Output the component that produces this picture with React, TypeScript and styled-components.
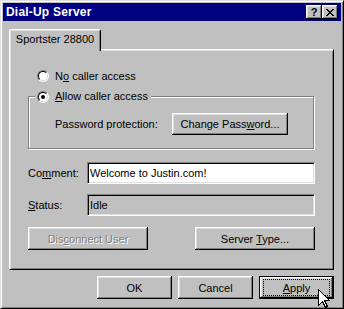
import React from 'react'
import styled, { createGlobalStyle, css } from 'styled-components'

const GlobalStyle = createGlobalStyle`
  html, body {
    margin: 0;
    padding: 0;
    background: #c0c0c0;
  }
  body {
    font-family: "Liberation Sans", Arial, sans-serif;
    font-size: 11px;
    color: #000;
  }
`

const bevel = css`
  box-shadow: inset -1px -1px #000, inset 1px 1px #fff, inset -2px -2px #808080, inset 2px 2px #dfdfdf;
`

const Window = styled.div`
  position: relative;
  box-sizing: border-box;
  width: 344px;
  height: 309px;
  background: #c0c0c0;
  border: 1px solid;
  border-color: #dfdfdf #000 #000 #dfdfdf;
  box-shadow: inset 1px 1px #fff, inset -1px -1px #808080;
  padding: 2px;
  display: flex;
  flex-direction: column;
  overflow: hidden;
`

const TitleBar = styled.div`
  height: 18px;
  background: #000080;
  color: #fff;
  font-weight: bold;
  display: flex;
  align-items: center;
  padding: 0 3px;
`

const Title = styled.span`
  flex: 1;
  font-size: 12px;
  line-height: 14px;
  letter-spacing: 0.2px;
`

const CaptionButton = styled.div`
  box-sizing: border-box;
  width: 16px;
  height: 14px;
  background: #c0c0c0;
  ${bevel}
  display: flex;
  align-items: center;
  justify-content: center;
  color: #000;
  font-weight: bold;
  font-size: 11px;
  line-height: 12px;
`

const Body = styled.div`
  flex: 1;
  padding: 8px 7px 0 6px;
  display: flex;
  flex-direction: column;
`

const TabRow = styled.div`
  display: flex;
`

const Tab = styled.div`
  position: relative;
  z-index: 1;
  box-sizing: border-box;
  width: 92px;
  height: 22px;
  margin-bottom: -2px;
  background: #c0c0c0;
  border: 1px solid;
  border-color: #fff #000 transparent #fff;
  border-bottom: none;
  border-radius: 2px 2px 0 0;
  box-shadow: inset 1px 1px #dfdfdf, inset -1px 0 #808080;
  text-align: center;
  line-height: 13px;
  padding-top: 3px;
`

const Panel = styled.div`
  box-sizing: border-box;
  height: 221px;
  border: 1px solid;
  border-color: #fff #000 #000 #fff;
  box-shadow: inset 1px 1px #dfdfdf, inset -1px -1px #808080;
  padding: 19px 18px 0 18px;
  display: flex;
  flex-direction: column;
`

const RadioRow = styled.label<{ $indent?: number }>`
  display: flex;
  align-items: center;
  height: 13px;
  gap: 6px;
  padding-left: ${(p) => p.$indent ?? 0}px;
`

const RadioOuter = styled.span`
  box-sizing: border-box;
  width: 12px;
  height: 12px;
  border-radius: 50%;
  border: 1px solid;
  border-color: #808080 #fff #fff #808080;
  display: flex;
`

const RadioInner = styled.span<{ $checked?: boolean }>`
  box-sizing: border-box;
  flex: 1;
  border-radius: 50%;
  border: 1px solid;
  border-color: #000 #dfdfdf #dfdfdf #000;
  background: #fff;
  display: flex;
  align-items: center;
  justify-content: center;

  &::after {
    content: '';
    width: 4px;
    height: 4px;
    border-radius: 50%;
    background: #000;
    display: ${(p) => (p.$checked ? 'block' : 'none')};
  }
`

const Key = styled.span`
  text-decoration: underline;
  text-underline-offset: 1px;
`

const Group = styled.fieldset`
  box-sizing: border-box;
  width: 286px;
  min-width: 0;
  margin: 8px 0 0 0;
  padding: 0 0 13px 0;
  border: 1px solid #808080;
  box-shadow: inset 1px 1px #fff, 1px 1px #fff;
`

const Legend = styled.legend`
  margin-left: 6px;
  padding: 0 3px 0 2px;
  background: #c0c0c0;
  line-height: 13px;
`

const PasswordRow = styled.div`
  display: flex;
  align-items: center;
  margin-top: 10px;
  padding-left: 26px;
`

const FieldLabel = styled.span<{ $width: number }>`
  width: ${(p) => p.$width}px;
  flex: none;
`

const FieldRow = styled.div<{ $gap: number }>`
  display: flex;
  align-items: center;
  margin-top: ${(p) => p.$gap}px;
`

const Field = styled.input<{ $readOnlyLook?: boolean }>`
  box-sizing: border-box;
  width: 228px;
  height: 22px;
  margin: 0;
  padding: 0 2px;
  font: inherit;
  color: #000;
  outline: none;
  background: ${(p) => (p.$readOnlyLook ? '#c0c0c0' : '#fff')};
  border: 1px solid;
  border-color: #808080 #fff #fff #808080;
  box-shadow: inset 1px 1px #000, inset -1px -1px #dfdfdf;
`

const SpreadRow = styled.div`
  display: flex;
  justify-content: space-between;
  margin-top: 11px;
`

const Actions = styled.div`
  display: flex;
  justify-content: flex-end;
  gap: 6px;
  margin-top: 6px;
`

const Button = styled.button<{ $width: number; $height?: number; $focused?: boolean }>`
  position: relative;
  box-sizing: border-box;
  width: ${(p) => p.$width}px;
  height: ${(p) => p.$height ?? 23}px;
  margin: 0;
  padding: 0;
  font: inherit;
  color: #000;
  background: #c0c0c0;
  border: none;
  ${bevel}

  &:disabled {
    color: #808080;
    text-shadow: 1px 1px #fff;
  }

  ${(p) =>
    p.$focused &&
    css`
      border: 1px solid #000;

      &::after {
        content: '';
        position: absolute;
        top: 2px;
        bottom: 2px;
        left: 3px;
        right: 3px;
        border: 1px dotted #000;
      }
    `}
`

const Pointer = styled.svg`
  position: absolute;
  left: 317px;
  top: 288px;
  width: 13px;
  height: 20px;
`

const Radio = ({ checked }: { checked?: boolean }) => (
  <RadioOuter>
    <RadioInner $checked={checked} />
  </RadioOuter>
)

const closeRows = ['11....11', '.11..11.', '..1111..', '...11...', '..1111..', '.11..11.', '11....11']

const CloseGlyph = () => (
  <svg width="8" height="7" viewBox="0 0 8 7" shapeRendering="crispEdges">
    {closeRows.map((row, y) =>
      row.split('').map((c, x) => (c === '1' ? <rect key={`${x}-${y}`} x={x} y={y} width="1" height="1" fill="#000" /> : null))
    )}
  </svg>
)

export default function App() {
  return (
    <>
      <GlobalStyle />
      <Window>
        <TitleBar>
          <Title>Dial-Up Server</Title>
          <CaptionButton>?</CaptionButton>
          <CaptionButton>
            <CloseGlyph />
          </CaptionButton>
        </TitleBar>
        <Body>
          <TabRow>
            <Tab>Sportster 28800</Tab>
          </TabRow>
          <Panel>
            <RadioRow $indent={9}>
              <Radio />
              <span>
                N<Key>o</Key> caller access
              </span>
            </RadioRow>
            <Group>
              <Legend>
                <RadioRow>
                  <Radio checked />
                  <span>
                    <Key>A</Key>llow caller access
                  </span>
                </RadioRow>
              </Legend>
              <PasswordRow>
                <FieldLabel $width={117}>Password protection:</FieldLabel>
                <Button $width={116} $height={22}>
                  Change Pass<Key>w</Key>ord...
                </Button>
              </PasswordRow>
            </Group>
            <FieldRow $gap={13}>
              <FieldLabel $width={59}>
                Co<Key>m</Key>ment:
              </FieldLabel>
              <Field defaultValue="Welcome to Justin.com!" />
            </FieldRow>
            <FieldRow $gap={10}>
              <FieldLabel $width={59}>
                <Key>S</Key>tatus:
              </FieldLabel>
              <Field $readOnlyLook readOnly value="Idle" />
            </FieldRow>
            <SpreadRow>
              <Button $width={120} disabled>
                Dis<Key>c</Key>onnect User
              </Button>
              <Button $width={120}>
                Server <Key>T</Key>ype...
              </Button>
            </SpreadRow>
          </Panel>
          <Actions>
            <Button $width={75}>OK</Button>
            <Button $width={75}>Cancel</Button>
            <Button $width={75} $focused>
              <Key>A</Key>pply
            </Button>
          </Actions>
        </Body>
        <Pointer viewBox="0 0 13 20" shapeRendering="crispEdges">
          <path d="M0.5 0.5 V16.5 L4.5 12.5 L7.5 18.5 L9.5 17.5 L6.5 11.5 H11.5 Z" fill="#fff" stroke="#000" strokeWidth="1" />
        </Pointer>
      </Window>
    </>
  )
}
